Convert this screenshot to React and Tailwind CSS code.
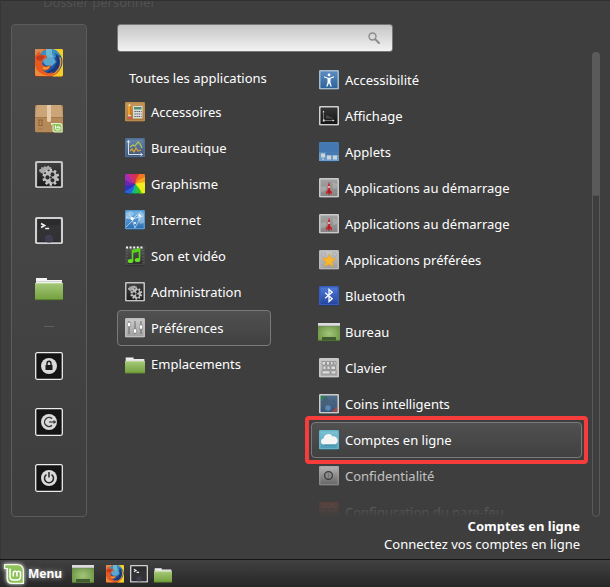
import { useState } from "react";

function Frame({ id, from, to, edge = "#d2d2d2", children }) {
  return (
    <svg viewBox="0 0 20 20" className="size-full">
      <defs>
        <linearGradient id={id} x1="0" y1="0" x2="0" y2="1">
          <stop offset="0" stopColor={from} />
          <stop offset="1" stopColor={to} />
        </linearGradient>
      </defs>
      <rect x="0" y="0.9" width="20" height="19.1" rx="1.6" fill="#1c1c1c" />
      <rect x="0" y="0" width="20" height="19.5" rx="1.3" fill={edge} />
      <rect x="1.5" y="1.5" width="17" height="16.5" rx="0.4" fill={`url(#${id})`} />
      {children}
    </svg>
  );
}

function FirefoxIcon() {
  return (
    <svg viewBox="0 0 28 28" className="size-full">
      <rect y="1" width="28" height="27" rx="1.5" fill="#222" />
      <rect width="28" height="27.4" rx="1.5" fill="#e8652a" />
      <path d="M18 0h8.500Q28 0 28 1.500V26q0 1.400-1.500 1.400H17C24 25 27 20 26 11Z" fill="#f5cf25" />
      <path d="M0 0h9L6 4 0 7Z" fill="#d98a52" />
      <circle cx="16" cy="13" r="11.500" fill="#1d55a0" />
      <path d="M5 5C8 1 12 0 18 0c4 1 6 3 7 7l-5-3 1 4-4 2 1 4-5 3-5-3-3-6Z" fill="#3b8dbe" />
      <path d="M11 0h6v5l2 3-5 2-3-4Z" fill="#7cc0dc" opacity=".8" />
      <path d="M8 10l5-2 6 1 2 4-4 4-7-1Z" fill="#5aa6cf" />
      <path d="M21 6l5 4-1 8-6 6-8 0 8-5 3-6Z" fill="#17387c" />
      <path d="M0 7l4-5 2 4 5 0 1 3-4 2-1 4c2 3 5 3 9 1-1 6-8 7-10 4 3 5 9 5 13 2-3 4-10 6-15 4C2 23 0 17 0 12Z" fill="#e45a20" />
      <path d="M1 8l4-2 5 1-2 3-2 2-4-1Z" fill="#c23a22" />
      <path d="M8 18c3 1 6 0 7-1-1 3-4 4-7 3Z" fill="#f4a13c" />
      <path d="M0 17c2 6 8 9.500 16 10H2q-2 0-2-2Z" fill="#f08a38" />
      <path d="M24 8c3 8-1 15-9 18 8-1 13-8 11-17Z" fill="#f3932a" />
    </svg>
  );
}

function PackageIcon() {
  return (
    <svg viewBox="0 0 28 28" className="size-full">
      <rect y="1" width="28" height="27" rx="1.500" fill="#222" />
      <rect width="28" height="27.400" rx="1.500" fill="#b58a58" />
      <path d="M2 0h24l2 12H0Z" fill="#cba577" />
      <path d="M0 12h28v1H0Z" fill="#a27a4c" />
      <path d="M12 0h4v16l-1 1h-2l-1-1Z" fill="#e4cba9" />
      <path d="M4 15v5M7 15v5M3 15h5M3 20.500h5" stroke="#8d6337" fill="none" />
      <path d="M3 24h5" stroke="#a0784a" fill="none" />
      <path d="M16 18h8.500q3 0 3 3v6.500H20q-2.500 0-2.500-3V20H16Z" fill="#dff0cd" />
      <path d="M17.500 19h6.500q2.500 0 2.500 2.500v5H20.500q-2 0-2-2.500v-4h-1Z" fill="#8ac556" />
      <path d="M20.500 20.500v3q0 1.500 1.500 1.500h1.500q1.500 0 1.500-1.500v-1.500m-3 1v-1h3M23 22v1.500" stroke="#fff" fill="none" />
    </svg>
  );
}

function Gear({ cx, cy, r }) {
  return (
    <g transform={`translate(${cx} ${cy})`}>
      {[0, 36, 72, 108, 144].map((angle) => (
        <path key={angle} d={`M0 ${-r}V${r}`} stroke="#c6c6c6" strokeWidth={r * 0.3} transform={`rotate(${angle})`} />
      ))}
      <circle r={r * 0.78} fill="#bdbdbd" />
      {[30, 150, 270].map((angle) => (
        <circle key={angle} cy={-r * 0.4} r={r * 0.24} fill="#2b2b2b" transform={`rotate(${angle})`} />
      ))}
      <circle r={r * 0.14} fill="#3a3a3a" />
    </g>
  );
}

function GearsIcon({ id }) {
  return (
    <Frame id={id} from="#3d3d3d" to="#1c1c1c" edge="#c3c3c3">
      <path d="M3 7.500V6l1.500-.5V4.300l1.500.4L7 3.500l1 .8 1.600-1L10.500 4.500l1-.3.3 1.500L9 6.500 7 8 6 9.500 4.500 8.500Z" fill="#a9a9a9" />
      <Gear cx={11.3} cy={11.7} r={6} />
    </Frame>
  );
}

function TerminalIcon({ id }) {
  return (
    <Frame id={id} from="#2c2c2e" to="#242426" edge="#d0d0d0">
      <path d="M2 9Q9 5 18 6v11.500H2Z" fill="#3a3a3d" opacity=".6" />
      <circle cx="10" cy="15.500" r="3" fill="#4b4260" opacity=".6" />
      <path d="M4.300 4.700L6.800 6.100 4.300 7.500M7.300 8.200h2.800" stroke="#f3f3f3" strokeWidth="1.200" fill="none" />
    </Frame>
  );
}

function FolderIcon({ id }) {
  return (
    <svg viewBox="0 -1 28 28" className="size-full">
      <defs>
        <linearGradient id={id} x1="0" y1="0" x2="0" y2="1">
          <stop offset="0" stopColor="#a4c878" />
          <stop offset="1" stopColor="#73a03d" />
        </linearGradient>
      </defs>
      <path d="M1 10V4h11v2h15v5H1Z" fill="#f4f4f4" />
      <path d="M1 7.500h26" stroke="#bdbdbd" strokeWidth=".6" />
      <path d="M0 9h28v17H0Z" fill={`url(#${id})`} />
      <path d="M0 9.400h28" stroke="#c4dda4" strokeWidth=".8" />
      <path d="M0 25.700h28" stroke="#4c7424" strokeWidth=".8" />
    </svg>
  );
}

function SessionIcon({ children }) {
  return (
    <svg viewBox="0 0 28 28" className="size-full">
      <rect x=".7" y=".7" width="26.600" height="26.600" rx="1.500" fill="#141414" stroke="#ececec" strokeWidth="1.300" />
      <circle cx="14" cy="14" r="8" fill="#dadada" />
      {children}
    </svg>
  );
}

function LockIcon() {
  return (
    <SessionIcon>
      <path d="M10.500 13h7v5h-7Z" fill="#1b1b1b" />
      <path d="M12 13v-1.500a2 2.300 0 0 1 4 0V13" fill="none" stroke="#1b1b1b" strokeWidth="1.400" />
    </SessionIcon>
  );
}

function LogoutIcon() {
  return (
    <SessionIcon>
      <path d="M17 10.600a4.500 4.500 0 1 0 0 6.800" fill="none" stroke="#3a3a3a" strokeWidth="1.400" />
      <path d="M14 14h5" stroke="#3a3a3a" strokeWidth="1.200" />
      <path d="M18.500 12L21.500 14l-3 2Z" fill="#3a3a3a" />
    </SessionIcon>
  );
}

function PowerIcon() {
  return (
    <SessionIcon>
      <path d="M11.500 10.500a4.500 4.500 0 1 0 5 0M14 8v5.500" fill="none" stroke="#242424" strokeWidth="1.500" />
    </SessionIcon>
  );
}

function AccessoriesIcon() {
  return (
    <Frame id="accessories" from="#c79657" to="#a97639" edge="#b98b4f">
      <path d="M3 4h3v9H3Z" fill="#f2a229" />
      <path d="M3 4l1.500-2.500L6 4Z" fill="#f3deb6" />
      <path d="M5 4h1v9H5Z" fill="#d0761a" />
      <path d="M3 13h3v1.500H3Z" fill="#ddd" />
      <path d="M3 14.500h3V17H3Z" fill="#d55353" />
      <rect x="8" y="4" width="9.500" height="12.500" rx=".6" fill="#d9dcda" />
      <path d="M9 5h7.500v2.500H9Z" fill="#4c8f70" />
      <path d="M9.500 9.500h7M9.500 12h7M9.500 14.500h7" stroke="#444" strokeWidth="1.200" strokeDasharray="1.200 .9" />
    </Frame>
  );
}

function OfficeIcon() {
  return (
    <Frame id="office" from="#6684aa" to="#3f5679" edge="#526d92">
      <path d="M3.500 3v13.500H17M2 4.500L3.500 2.500 5 4.500M15.500 15l2 1.500-2 1.500" fill="none" stroke="#d8e0eb" strokeWidth="1" />
      <path d="M5 9l3-2 2 1 3-4 2 2 2 4" fill="none" stroke="#b1c657" strokeWidth="1.200" />
      <path d="M5 13l2-2 2 3 2-4 2 3 3-1" fill="none" stroke="#e0a32f" strokeWidth="1.200" />
    </Frame>
  );
}

function GraphicsIcon() {
  const colors = ["#e0392c", "#f27521", "#f6a81c", "#f5ed1c", "#e9ee1a", "#35c42a", "#17b888", "#2464d8", "#3430bd", "#6a27ad", "#a02eae", "#cf2e76"];
  return (
    <svg viewBox="0 0 20 20" className="size-full">
      <clipPath id="wheel">
        <rect width="20" height="19.500" rx="1.200" />
      </clipPath>
      <rect y="1" width="20" height="19" rx="1.500" fill="#191919" />
      <g clipPath="url(#wheel)">
        {colors.map((color, i) => (
          <path key={color} d="M10 10Q7 2 10-6L21-4Q14 2 10 10Z" fill={color} transform={`rotate(${i * 30} 10 10)`} />
        ))}
      </g>
    </svg>
  );
}

function InternetIcon() {
  return (
    <Frame id="internet" from="#77b6e7" to="#2d70b5" edge="#5598d0">
      <path d="M1 3l5-2 3 3-3 4-5 1ZM12 7l4-4 3 1v9l-4 1Z" fill="#b9d9ef" opacity=".5" />
      <path d="M1 7l6 2 9-7M7 9l3 9M4 4l3 5 11-3M10 18L16 6M1 17l9-9" fill="none" stroke="#e9f5ff" strokeWidth=".6" />
      <circle cx="7" cy="8.500" r="1.500" fill="#fff" />
      <circle cx="14.500" cy="5.500" r="1.200" fill="#fff" />
      <circle cx="10" cy="13" r="1" fill="#fff" />
    </Frame>
  );
}

function MediaIcon() {
  return (
    <Frame id="media" from="#555" to="#303030" edge="#484848">
      <path d="M1 1.500h18" stroke="#f4f4f4" strokeWidth="2.200" strokeDasharray="2 1.600" />
      <path d="M2 4v14M18 4v14" stroke="#686868" strokeDasharray="1.500 1.500" />
      <path d="M7.500 15V4.500l7-1.500V13" fill="none" stroke="#58d51b" strokeWidth="1.700" />
      <path d="M7.500 6l7-1.500" stroke="#58d51b" strokeWidth="2" />
      <ellipse cx="5.500" cy="15" rx="2.800" ry="2.100" fill="#65df25" />
      <ellipse cx="12.500" cy="14" rx="2.800" ry="2.100" fill="#65df25" />
    </Frame>
  );
}

function PreferencesIcon() {
  return (
    <Frame id="preferences" from="#c9c9c9" to="#a2a2a2" edge="#bebebe">
      <path d="M4 3v13M10 3v13M16 3v13" stroke="#686868" strokeWidth="1" />
      <path d="M2.500 4.500h3v4h-3ZM8.500 11h3v4h-3ZM14.500 7h3v4h-3Z" fill="#fff" stroke="#767676" strokeWidth=".5" />
    </Frame>
  );
}

function AccessibilityIcon() {
  return (
    <Frame id="a11y" from="#5a8cc0" to="#2e659d" edge="#a3b9ce">
      <circle cx="10" cy="4.900" r="1.400" fill="#fff" />
      <path d="M5 6.800l3.800 1.400h2.400L15 6.800" fill="none" stroke="#fff" strokeWidth="1.100" />
      <path d="M8.500 8h3v4.500l1.300 4h-1.200L10 13l-1.600 3.500H7.200l1.300-4Z" fill="#fff" />
    </Frame>
  );
}

function DisplayIcon() {
  return (
    <Frame id="display" from="#353535" to="#151515" edge="#d0d0d0">
      <path d="M4.500 5.500v8.500M6 14.500h8" stroke="#8d8d8d" strokeWidth=".8" />
      <path d="M3.500 6.200l1-1.800 1 1.800ZM13.500 13.500l2.200 1-2.200 1ZM3.800 13.500h2v2h-2Z" fill="#ddd" />
      <path d="M7 9l8 3.500H7Z" fill="#4a4a4a" />
    </Frame>
  );
}

function AppletsIcon() {
  return (
    <Frame id="applets" from="#4a80b8" to="#4479b0" edge="#457ab0">
      <path d="M1 2h18v8H1Z" fill="#4478b2" />
      <path d="M0 10.500h6.500V13H20v6H0Z" fill="#6b9bcb" />
      <path d="M2 11.500h4v4H2ZM8 13.500h4v4H8ZM14 13.500h4v4h-4Z" fill="#cdd2d6" />
      <path d="M4 16.500v1.500" stroke="#e6ebef" />
    </Frame>
  );
}

function RocketIcon({ id }) {
  return (
    <Frame id={id} from="#a2a2a2" to="#858585" edge="#c9c9c9">
      <path d="M2 9l4-1 2 2-2 3-4 1ZM14 4l4 2v4l-4 1Z" fill="#bbb" opacity=".5" />
      <path d="M10 3.500Q8.500 7 8.800 12L7 14v2.500L9.200 15h1.600l2.200 1.500V14L11.200 12Q11.500 7 10 3.500Z" fill="#c9262c" />
      <circle cx="10" cy="9" r=".9" fill="#eee" />
      <path d="M10 12v5" stroke="#8e171b" />
    </Frame>
  );
}

function FavoriteIcon() {
  return (
    <Frame id="favorite" from="#c6c6c6" to="#9e9e9e" edge="#b8b8b8">
      <circle cx="4.500" cy="4.500" r="2" fill="none" stroke="#aaa" />
      <circle cx="15.500" cy="4.500" r="2" fill="none" stroke="#aaa" />
      <circle cx="3.500" cy="15" r="2" fill="none" stroke="#b5b5b5" />
      <path d="M10 4l2 4.200 4.700.5-3.500 3.200 1 4.600L10 14.200l-4.200 2.300 1-4.600L3.300 8.700 8 8.200Z" fill="#f9b62c" stroke="#e89a22" strokeWidth=".5" />
    </Frame>
  );
}

function BluetoothIcon() {
  return (
    <Frame id="bluetooth" from="#4f79d8" to="#2446a0" edge="#365bb9">
      <path d="M6.200 6.700l7 6L10 15.500v-12l3.200 2.800-7 6" fill="none" stroke="#fff" strokeWidth="1.300" />
    </Frame>
  );
}

function DesktopIcon({ id }) {
  return (
    <svg viewBox="0 0 22 20" className="h-5 w-[22px] shrink-0">
      <defs>
        <radialGradient id={id} cx=".5" cy=".6" r=".6">
          <stop stopColor="#a3c67a" />
          <stop offset="1" stopColor="#6b9442" />
        </radialGradient>
      </defs>
      <rect y="1" width="22" height="18" rx=".8" fill={`url(#${id})`} />
      <path d="M0 1h22v3H0Z" fill="#dcdcdc" />
      <path d="M0 4h22" stroke="#777" strokeWidth=".5" />
      <path d="M4 18.500V15h14v3.500Z" fill="#435b31" />
      <path d="M0 18.700h22" stroke="#3f602a" strokeWidth=".7" />
    </svg>
  );
}

function KeyboardIcon() {
  return (
    <Frame id="keyboard" from="#c5c5c5" to="#adadad" edge="#c9c9c9">
      <path d="M3 3.500h3.500V7H3ZM7.500 3.500h3V7h-3ZM11.500 3.500h2.500V7h-2.500ZM15 3.500h2V7h-2ZM4 8h3v3.500H4ZM8 8h3v3.500H8ZM12 8h4.500v3.500H12ZM3 12.800h8V16H3ZM12 12.800h5V16h-5Z" fill="#ddd" stroke="#7e7e7e" strokeWidth=".7" />
    </Frame>
  );
}

function CornersIcon() {
  return (
    <Frame id="corners" from="#526f89" to="#36577b" edge="#ccc">
      <path d="M2 2h5L2 7Z" fill="#27864d" />
      <path d="M18 17.500h-5l5-5Z" fill="#b34639" />
      <path d="M7 2l4 5-6 6-3-1V8ZM13 4l4 5-3 4Z" fill="#466079" />
      <circle cx="9" cy="14" r="2.800" fill="#6c99c4" opacity=".7" />
    </Frame>
  );
}

function CloudIcon() {
  return (
    <Frame id="cloud" from="#7cc3d4" to="#4d9fb8" edge="#67b3c7">
      <path d="M4.500 14.500a3.200 3.200 0 0 1 .2-6.300A4.700 4.700 0 0 1 13.500 6.500a4 4 0 0 1 2.200 8Z" fill="#f5f5f5" />
      <path d="M5 15h11" stroke="#2d7890" strokeWidth=".7" />
    </Frame>
  );
}

function PrivacyIcon() {
  return (
    <Frame id="privacy" from="#cbcbcb" to="#8f8f8f" edge="#bdbdbd">
      <circle cx="9.500" cy="9.500" r="3.900" fill="#aaa" stroke="#353535" strokeWidth="1.200" />
      <path d="M9.500 7.500v4" stroke="#888" />
    </Frame>
  );
}

function FirewallIcon() {
  return (
    <Frame id="firewall" from="#b0503f" to="#8d392d" edge="#a34537">
      <path d="M1 5h18M1 9h18M1 13h18M7 1v4M13 1v4M4 5v4M10 5v4M16 5v4M7 9v4M13 9v4" stroke="#c98a7e" strokeWidth=".7" />
    </Frame>
  );
}

function MintLogo() {
  return (
    <svg viewBox="0 0 20 20" className="size-full">
      <path d="M0 0h13q7 0 7 7v13H8q-5.500 0-5.500-5.500V5H0Z" fill="#f1f8e8" />
      <path d="M1.300 1.300H13q5.700 0 5.700 5.700v11.700H8.500q-4.500 0-4.500-4.500V4H1.300Z" fill="#8ec25c" />
      <path d="M6 4.500v8q0 3.500 3.500 3.500h3.500q3.500 0 3.500-3.500V9a1.800 1.800 0 0 0-3.600 0v3.500M12.900 9a1.800 1.800 0 0 0-3.600 0v3.500" fill="none" stroke="#fff" strokeWidth="1.500" />
    </svg>
  );
}

const favorites = [
  { name: "Firefox", icon: <FirefoxIcon /> },
  { name: "Gestionnaire de logiciels", icon: <PackageIcon /> },
  { name: "Paramètres système", icon: <GearsIcon id="side-gears" /> },
  { name: "Terminal", icon: <TerminalIcon id="side-terminal" /> },
  { name: "Fichiers", icon: <FolderIcon id="side-folder" /> },
];

const session = [
  { name: "Verrouiller l'écran", icon: <LockIcon /> },
  { name: "Fermer la session", icon: <LogoutIcon /> },
  { name: "Éteindre", icon: <PowerIcon /> },
];

const categories = [
  { name: "Accessoires", icon: <AccessoriesIcon /> },
  { name: "Bureautique", icon: <OfficeIcon /> },
  { name: "Graphisme", icon: <GraphicsIcon /> },
  { name: "Internet", icon: <InternetIcon /> },
  { name: "Son et vidéo", icon: <MediaIcon /> },
  { name: "Administration", icon: <GearsIcon id="cat-gears" /> },
  { name: "Préférences", icon: <PreferencesIcon /> },
  { name: "Emplacements", icon: <FolderIcon id="cat-folder" /> },
];

const apps = [
  { name: "Accessibilité", icon: <AccessibilityIcon /> },
  { name: "Affichage", icon: <DisplayIcon /> },
  { name: "Applets", icon: <AppletsIcon /> },
  { name: "Applications au démarrage", icon: <RocketIcon id="rocket-a" /> },
  { name: "Applications au démarrage", icon: <RocketIcon id="rocket-b" /> },
  { name: "Applications préférées", icon: <FavoriteIcon /> },
  { name: "Bluetooth", icon: <BluetoothIcon /> },
  { name: "Bureau", icon: <DesktopIcon id="app-desktop" /> },
  { name: "Clavier", icon: <KeyboardIcon /> },
  { name: "Coins intelligents", icon: <CornersIcon /> },
  { name: "Comptes en ligne", icon: <CloudIcon />, marked: true },
  { name: "Confidentialité", icon: <PrivacyIcon /> },
  { name: "Configuration du pare-feu", icon: <FirewallIcon /> },
];

function MenuRow({ name, icon, selected, onClick }) {
  return (
    <button
      type="button"
      onClick={onClick}
      className={
        selected
          ? "flex h-9 w-full items-center gap-1.5 rounded border border-[#7a7a7a] bg-linear-to-b from-[#505050] to-[#414141] px-[7px] text-left"
          : "flex h-9 w-full items-center gap-1.5 rounded border border-transparent px-[7px] text-left"
      }
    >
      <span className="flex size-5 shrink-0 justify-center">{icon}</span>
      <span className="whitespace-nowrap">{name}</span>
    </button>
  );
}

function SideButtons({ items }) {
  return (
    <div className="flex flex-col gap-7">
      {items.map((item) => (
        <button key={item.name} type="button" aria-label={item.name} className="size-7">
          {item.icon}
        </button>
      ))}
    </div>
  );
}

export default function App() {
  const [category, setCategory] = useState("Préférences");
  const [query, setQuery] = useState("");

  return (
    <div className="flex min-h-screen flex-col bg-[#3e3e3e] font-['Noto_Sans',sans-serif] text-[13px] leading-[18px] text-white">
      <main className="flex flex-1 flex-col border-l border-[#363636]">
        {/* desktop label showing through the translucent menu */}
        <div className="h-6 overflow-hidden border-t border-[#303030] pl-[42px] text-[#525252]">
          <p className="-mt-2">Dossier personnel</p>
        </div>

        <div className="flex px-2.5">
          <aside className="flex w-[76px] shrink-0 flex-col items-center rounded border border-[#5c5c5c] bg-linear-to-b from-[#4a4a4a] to-[#3e3e3e] py-6">
            <SideButtons items={favorites} />
            <hr className="my-[25px] w-2.5 border-[#606060]" />
            <SideButtons items={session} />
          </aside>

          <div className="ml-[30px] flex min-w-0 flex-1 flex-col">
            <div className="flex h-7 w-[276px] items-center rounded-[3px] border border-[#777] bg-linear-to-b from-[#c6c6c6] to-[#f2f2f2] pr-3">
              <input
                type="text"
                aria-label="Rechercher"
                value={query}
                onChange={(e) => setQuery(e.target.value)}
                className="h-full min-w-0 flex-1 bg-transparent px-2 text-[#333] outline-none"
              />
              <svg viewBox="0 0 12 12" className="size-3" fill="none" stroke="#8c8c8c">
                <circle cx="4.500" cy="4.500" r="3.500" strokeWidth="1.400" />
                <path d="M7.200 7.200L11 11" strokeWidth="2" strokeLinecap="round" />
              </svg>
            </div>

            <div className="flex h-0 min-h-0 grow">
              <nav className="w-[154px] shrink-0 pt-2.5">
                <button type="button" className="flex h-8 w-full items-center pl-3 text-left whitespace-nowrap">
                  Toutes les applications
                </button>
                {categories.map((c) => (
                  <MenuRow key={c.name} {...c} selected={c.name === category} onClick={() => setCategory(c.name)} />
                ))}
              </nav>

              <div className="relative ml-8 min-w-0 flex-1">
                <ul className="h-full overflow-hidden px-2 pt-2.5">
                  {apps.map((app, i) => (
                    <li key={i} className="relative">
                      <MenuRow name={app.name} icon={app.icon} selected={app.marked} />
                      {app.marked && (
                        <span className="pointer-events-none absolute -inset-1.5 z-20 rounded border-4 border-[#f73c3c]" />
                      )}
                    </li>
                  ))}
                </ul>
                <div className="pointer-events-none absolute inset-x-0 bottom-0 z-10 h-[60px] bg-linear-to-b from-[#3e3e3e]/0 to-[#3e3e3e]" />
              </div>

              <div className="ml-0.5 w-2 shrink-0 rounded-full border border-[#5a5a5a]">
                <div className="-mx-px -mt-px h-36 rounded-full bg-[#5a5a5a]" />
              </div>
            </div>
          </div>
        </div>

        <div className="pr-[30px] pb-1.5 text-right">
          <p className="font-bold">Comptes en ligne</p>
          <p>Connectez vos comptes en ligne</p>
        </div>
      </main>

      <footer className="flex h-7 items-center border-t border-[#151515] bg-linear-to-b from-[#414141] to-[#272727] pl-1">
        <button type="button" className="flex items-center gap-1 text-xs font-bold [text-shadow:0_0_5px_#ffffff99]">
          <span className="size-5 drop-shadow-[0_0_2px_#ffffff]">
            <MintLogo />
          </span>
          Menu
        </button>
        <button type="button" aria-label="Bureau" className="ml-2.5">
          <DesktopIcon id="bar-desktop" />
        </button>
        <div className="ml-3 flex gap-1.5">
          <button type="button" aria-label="Firefox" className="size-[18px]">
            <FirefoxIcon />
          </button>
          <button type="button" aria-label="Terminal" className="size-[18px]">
            <TerminalIcon id="bar-terminal" />
          </button>
          <button type="button" aria-label="Fichiers" className="size-[18px]">
            <FolderIcon id="bar-folder" />
          </button>
        </div>
      </footer>
    </div>
  );
}
